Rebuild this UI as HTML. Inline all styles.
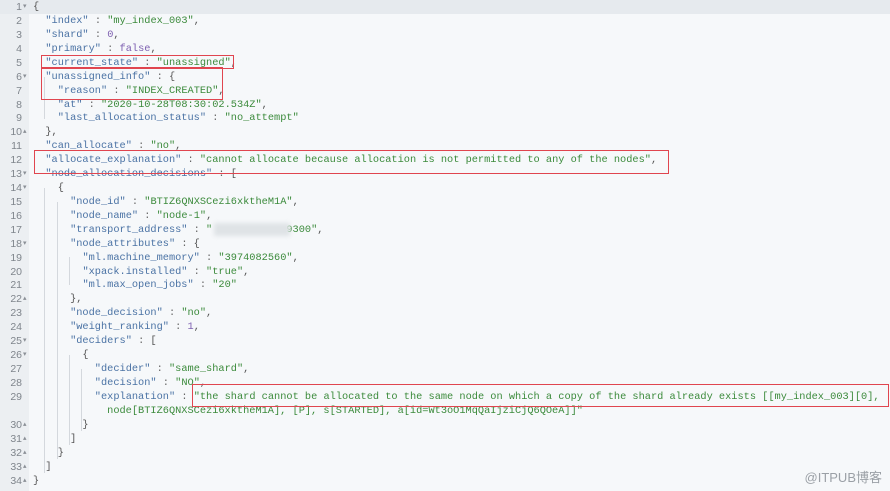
<!DOCTYPE html>
<html><head><meta charset="utf-8"><style>
html,body{margin:0;padding:0;}
body{width:890px;height:491px;background:#f6f8fa;position:relative;overflow:hidden;font-family:"Liberation Mono",monospace;font-size:10.3px;}
.gut{position:absolute;left:0;top:0;width:29px;height:491px;background:#eceff2;}
.hl{position:absolute;left:0;top:0;width:890px;height:14px;background:#e6eaee;}
.r{position:absolute;left:0;height:14px;line-height:14px;white-space:pre;}
.n{position:absolute;left:0;width:22px;text-align:right;color:#7f858c;font-family:"Liberation Sans",sans-serif;font-size:10.5px;}
.f{position:absolute;left:23px;color:#8a8f96;font-size:7px;font-family:"Liberation Sans",sans-serif;}
.c{position:absolute;left:33px;color:#555;}
.k{color:#4a72a4}.s{color:#3b8a3b}.v{color:#7d5fb0}.p{color:#666}
.box{position:absolute;border:1.5px solid #e0454f;box-sizing:border-box;}
.g{position:absolute;width:1px;background:#d4d8dd;}
.blur{position:absolute;left:214px;top:223px;width:76px;height:13px;background:#dfe3e6;filter:blur(2px);}
.wm{position:absolute;right:8px;top:467px;font-family:"Liberation Sans","Noto Sans CJK SC",sans-serif;font-size:13px;color:#9ba0a6;}
</style></head><body>
<div class="gut"></div>
<div class="hl"></div>

<div class="g" style="left:44px;top:77px;height:42px"></div>
<div class="g" style="left:44px;top:188px;height:285px"></div>
<div class="g" style="left:57px;top:202px;height:257px"></div>
<div class="g" style="left:69px;top:257px;height:28px"></div>
<div class="g" style="left:69px;top:355px;height:90px"></div>
<div class="g" style="left:81px;top:369px;height:62px"></div>

<div class="r" style="top:0"><span class="n">1</span><span class="f">▾</span><span class="c">{</span></div>
<div class="r" style="top:14px"><span class="n">2</span><span class="c">  <span class="k">"index"</span> <span class="p">:</span> <span class="s">"my_index_003"</span>,</span></div>
<div class="r" style="top:28px"><span class="n">3</span><span class="c">  <span class="k">"shard"</span> <span class="p">:</span> <span class="v">0</span>,</span></div>
<div class="r" style="top:42px"><span class="n">4</span><span class="c">  <span class="k">"primary"</span> <span class="p">:</span> <span class="v">false</span>,</span></div>
<div class="r" style="top:56px"><span class="n">5</span><span class="c">  <span class="k">"current_state"</span> <span class="p">:</span> <span class="s">"unassigned"</span>,</span></div>
<div class="r" style="top:70px"><span class="n">6</span><span class="f">▾</span><span class="c">  <span class="k">"unassigned_info"</span> <span class="p">:</span> {</span></div>
<div class="r" style="top:84px"><span class="n">7</span><span class="c">    <span class="k">"reason"</span> <span class="p">:</span> <span class="s">"INDEX_CREATED"</span>,</span></div>
<div class="r" style="top:98px"><span class="n">8</span><span class="c">    <span class="k">"at"</span> <span class="p">:</span> <span class="s">"2020-10-28T08:30:02.534Z"</span>,</span></div>
<div class="r" style="top:111px"><span class="n">9</span><span class="c">    <span class="k">"last_allocation_status"</span> <span class="p">:</span> <span class="s">"no_attempt"</span></span></div>
<div class="r" style="top:125px"><span class="n">10</span><span class="f">▴</span><span class="c">  },</span></div>
<div class="r" style="top:139px"><span class="n">11</span><span class="c">  <span class="k">"can_allocate"</span> <span class="p">:</span> <span class="s">"no"</span>,</span></div>
<div class="r" style="top:153px"><span class="n">12</span><span class="c">  <span class="k">"allocate_explanation"</span> <span class="p">:</span> <span class="s">"cannot allocate because allocation is not permitted to any of the nodes"</span>,</span></div>
<div class="r" style="top:167px"><span class="n">13</span><span class="f">▾</span><span class="c">  <span class="k">"node_allocation_decisions"</span> <span class="p">:</span> [</span></div>
<div class="r" style="top:181px"><span class="n">14</span><span class="f">▾</span><span class="c">    {</span></div>
<div class="r" style="top:195px"><span class="n">15</span><span class="c">      <span class="k">"node_id"</span> <span class="p">:</span> <span class="s">"BTIZ6QNXSCezi6xktheM1A"</span>,</span></div>
<div class="r" style="top:209px"><span class="n">16</span><span class="c">      <span class="k">"node_name"</span> <span class="p">:</span> <span class="s">"node-1"</span>,</span></div>
<div class="r" style="top:223px"><span class="n">17</span><span class="c">      <span class="k">"transport_address"</span> <span class="p">:</span> <span class="s">"            9300"</span>,</span></div>
<div class="r" style="top:237px"><span class="n">18</span><span class="f">▾</span><span class="c">      <span class="k">"node_attributes"</span> <span class="p">:</span> {</span></div>
<div class="r" style="top:251px"><span class="n">19</span><span class="c">        <span class="k">"ml.machine_memory"</span> <span class="p">:</span> <span class="s">"3974082560"</span>,</span></div>
<div class="r" style="top:265px"><span class="n">20</span><span class="c">        <span class="k">"xpack.installed"</span> <span class="p">:</span> <span class="s">"true"</span>,</span></div>
<div class="r" style="top:278px"><span class="n">21</span><span class="c">        <span class="k">"ml.max_open_jobs"</span> <span class="p">:</span> <span class="s">"20"</span></span></div>
<div class="r" style="top:292px"><span class="n">22</span><span class="f">▴</span><span class="c">      },</span></div>
<div class="r" style="top:306px"><span class="n">23</span><span class="c">      <span class="k">"node_decision"</span> <span class="p">:</span> <span class="s">"no"</span>,</span></div>
<div class="r" style="top:320px"><span class="n">24</span><span class="c">      <span class="k">"weight_ranking"</span> <span class="p">:</span> <span class="v">1</span>,</span></div>
<div class="r" style="top:334px"><span class="n">25</span><span class="f">▾</span><span class="c">      <span class="k">"deciders"</span> <span class="p">:</span> [</span></div>
<div class="r" style="top:348px"><span class="n">26</span><span class="f">▾</span><span class="c">        {</span></div>
<div class="r" style="top:362px"><span class="n">27</span><span class="c">          <span class="k">"decider"</span> <span class="p">:</span> <span class="s">"same_shard"</span>,</span></div>
<div class="r" style="top:376px"><span class="n">28</span><span class="c">          <span class="k">"decision"</span> <span class="p">:</span> <span class="s">"NO"</span>,</span></div>
<div class="r" style="top:390px"><span class="n">29</span><span class="c">          <span class="k">"explanation"</span> <span class="p">:</span> <span class="s">"the shard cannot be allocated to the same node on which a copy of the shard already exists [[my_index_003][0],</span></span></div>
<div class="r" style="top:404px"><span class="c"><span class="s">            node[BTIZ6QNXSCezi6xktheM1A], [P], s[STARTED], a[id=Wt3oO1MqQaIjziCjQ6QOeA]]"</span></span></div>
<div class="r" style="top:418px"><span class="n">30</span><span class="f">▴</span><span class="c">        }</span></div>
<div class="r" style="top:432px"><span class="n">31</span><span class="f">▴</span><span class="c">      ]</span></div>
<div class="r" style="top:446px"><span class="n">32</span><span class="f">▴</span><span class="c">    }</span></div>
<div class="r" style="top:460px"><span class="n">33</span><span class="f">▴</span><span class="c">  ]</span></div>
<div class="r" style="top:474px"><span class="n">34</span><span class="f">▴</span><span class="c">}</span></div>

<div class="blur"></div>

<div class="box" style="left:41px;top:55px;width:193px;height:14px"></div>
<div class="box" style="left:41px;top:67px;width:182px;height:33px"></div>
<div class="box" style="left:34px;top:150px;width:635px;height:24px"></div>
<div class="box" style="left:192px;top:384px;width:697px;height:23px"></div>

<div class="wm">@ITPUB博客</div>
</body></html>
